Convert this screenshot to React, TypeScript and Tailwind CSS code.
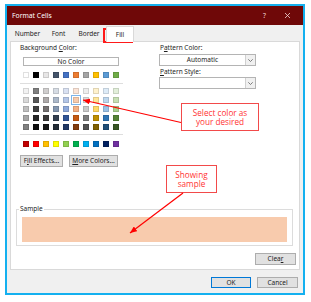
const BASE = ["#ffffff", "#000000", "#e7e6e6", "#44546a", "#4472c4", "#ed7d31", "#a5a5a5", "#ffc000", "#5b9bd5", "#70ad47"];

const TINTS = [
	["#f2f2f2", "#7f7f7f", "#d0cece", "#d6dce4", "#d9e1f2", "#fce4d6", "#ededed", "#fff2cc", "#ddebf7", "#e2efda"],
	["#d9d9d9", "#595959", "#aeaaaa", "#acb9ca", "#b4c6e7", "#f8cbad", "#dbdbdb", "#ffe699", "#bdd7ee", "#c6e0b4"],
	["#bfbfbf", "#404040", "#757171", "#8497b0", "#8ea9db", "#f4b084", "#c9c9c9", "#ffd966", "#9bc2e6", "#a9d08e"],
	["#a6a6a6", "#262626", "#3a3838", "#333f4f", "#305496", "#c65911", "#7b7b7b", "#bf8f00", "#2f75b5", "#548235"],
	["#808080", "#0d0d0d", "#161616", "#222b35", "#203764", "#833c0c", "#525252", "#806000", "#1f4e78", "#375623"],
];

const STANDARD = ["#c00000", "#ff0000", "#ffc000", "#ffff00", "#92d050", "#00b050", "#00b0f0", "#0070c0", "#002060", "#7030a0"];

function Swatch({ color, selected }: { color: string; selected?: boolean }) {
	return (
		<div className="relative w-[6px] h-[6px]">
			<div
				className="w-full h-full shadow-[inset_0_0_0_1px_rgba(0,0,0,0.12)]"
				style={{ backgroundColor: color }}
			/>
			{selected && <div className="absolute -inset-[2px] border border-[#7db4ea]" />}
		</div>
	);
}

function SwatchRow({ colors, selected }: { colors: string[]; selected?: number }) {
	return (
		<div className="flex gap-[4px] ml-[3px]">
			{colors.map((c, i) => (
				<Swatch key={c + i} color={c} selected={i === selected} />
			))}
		</div>
	);
}

function Dropdown({ value }: { value?: string }) {
	return (
		<div className="flex w-[97px] h-[12px] bg-white border border-[#b4b4b4]">
			<div className="flex-1 flex items-center justify-center">{value}</div>
			<div className="w-[10px] border-l border-[#d0d0d0] bg-[#f0f0f0] flex items-center justify-center">
				<svg width="5" height="3" viewBox="0 0 5 3" fill="none" stroke="#606060" strokeWidth="0.8">
					<path d="M0.3 0.3L2.5 2.5L4.7 0.3" />
				</svg>
			</div>
		</div>
	);
}

function Button({ children, w, primary }: { children: React.ReactNode; w: string; primary?: boolean }) {
	return (
		<div
			className={`${w} flex items-center justify-center bg-[#e1e1e1] border ${
				primary ? "border-[#0078d7]" : "border-[#adadad]"
			}`}
		>
			{children}
		</div>
	);
}

export default function App() {
	return (
		<div className="relative w-[311px] h-[302px] bg-white pl-[5px] pt-[4px] font-['Noto_Sans',sans-serif] text-[6.5px] leading-[8px] text-[#1e1e1e]">
			<div className="w-[300px] h-[291px] border-2 border-[#14b0ef] flex flex-col">
				{/* Title bar */}
				<div className="h-[19px] bg-[#6f0808] flex items-center pl-[5px] text-white text-[6.8px]">
					<span>Format Cells</span>
					<span className="ml-auto mr-[19px] text-[#f2d6d6]">?</span>
					<svg width="5" height="5" viewBox="0 0 5 5" stroke="#f2d6d6" strokeWidth="0.8" className="mr-[13px]">
						<path d="M0 0L5 5M5 0L0 5" />
					</svg>
				</div>

				<div className="flex-1 bg-[#f0f0f0] flex flex-col px-[3px]">
					{/* Tabs */}
					<div className="h-[16px] flex items-end">
						<div className="w-[35px] h-[15px] flex items-center justify-center">Number</div>
						<div className="w-[27px] h-[15px] flex items-center justify-center">Font</div>
						<div className="w-[34px] h-[15px] flex items-center justify-center">Border</div>
						<div className="relative z-10 w-[28px] h-[16px] -mb-px flex items-center justify-center bg-white border-x border-t border-[#d9d9d9]">
							Fill
						</div>
					</div>

					{/* Panel */}
					<div className="h-[229px] bg-white border border-[#d9d9d9] flex flex-col">
						<div className="h-[163px] flex pl-[9px]">
							{/* Background colour */}
							<div className="w-[139px] flex flex-col">
								<div className="mt-[2px] h-[8px]">
									Background <span className="underline">C</span>olor:
								</div>
								<div className="mt-[5px] ml-[3px] w-[96px] h-[9px] border border-[#b4b4b4] flex items-center justify-center">
									No Color
								</div>
								<div className="mt-[6px]">
									<SwatchRow colors={BASE} />
								</div>
								<div className="mt-[5px] w-[103px] h-px bg-[#dedede]" />
								<div className="mt-[4px] flex flex-col gap-[3px]">
									{TINTS.map((row, i) => (
										<SwatchRow key={i} colors={row} selected={i === 1 ? 5 : undefined} />
									))}
								</div>
								<div className="mt-[4px] w-[103px] h-px bg-[#dedede]" />
								<div className="mt-[6px]">
									<SwatchRow colors={STANDARD} />
								</div>
								<div className="mt-[8px] flex gap-[6px] h-[12px]">
									<Button w="w-[43px]">
										F<span className="underline">i</span>ll Effects...
									</Button>
									<Button w="w-[49px]">
										<span className="underline">M</span>ore Colors...
									</Button>
								</div>
							</div>

							{/* Pattern */}
							<div className="flex flex-col">
								<div className="mt-[2px] h-[8px] pl-[1px]">
									P<span className="underline">a</span>ttern Color:
								</div>
								<div className="mt-[2px]">
									<Dropdown value="Automatic" />
								</div>
								<div className="mt-[2px] h-[8px] pl-[1px]">
									<span className="underline">P</span>attern Style:
								</div>
								<div className="mt-[1px]">
									<Dropdown />
								</div>
							</div>
						</div>

						{/* Sample */}
						<fieldset className="ml-[5px] w-[277px] h-[41px] border border-[#dcdcdc] px-[5px]">
							<legend className="ml-[-3px] px-[1px] h-[8px]">Sample</legend>
							<div className="mt-[4px] h-[25px] bg-[#f8cbad]" />
						</fieldset>

						<div className="mt-[7px] flex justify-end pr-[3px]">
							<Button w="w-[41px] h-[12px]">
								Clea<span className="underline">r</span>
							</Button>
						</div>
					</div>

					{/* Dialog buttons */}
					<div className="mt-[7px] flex justify-end gap-[6px] pr-[2px] h-[11px]">
						<Button w="w-[40px]" primary>
							OK
						</Button>
						<Button w="w-[41px]">Cancel</Button>
					</div>
				</div>
			</div>

			{/* Annotations */}
			<div className="absolute left-[103px] top-[28px] w-[30px] h-[15px] border-2 border-[#ff1a1a]" />
			<div className="absolute left-[181px] top-[103px] w-[78px] h-[28px] bg-white border border-[#f24a4a] flex flex-col items-center justify-center text-[#ff3333] text-[8.2px] leading-[9.5px] font-['Open_Sans',sans-serif]">
				<span>Select color as</span>
				<span>your desired</span>
			</div>
			<div className="absolute left-[166px] top-[165px] w-[51px] h-[28px] bg-white border border-[#f24a4a] flex flex-col items-center justify-center text-[#ff3333] text-[8.2px] leading-[9.5px] font-['Open_Sans',sans-serif]">
				<span>Showing</span>
				<span>sample</span>
			</div>
			<svg className="absolute left-0 top-0 pointer-events-none" width="311" height="302" viewBox="0 0 311 302">
				<defs>
					<marker id="ah" markerUnits="userSpaceOnUse" markerWidth="7" markerHeight="6" refX="7" refY="3" orient="auto">
						<path d="M0 0L7 3L0 6z" fill="#ff0000" />
					</marker>
				</defs>
				<line x1="181" y1="122.5" x2="83" y2="100" stroke="#ff0000" strokeWidth="1.2" markerEnd="url(#ah)" />
				<line x1="183" y1="193" x2="130" y2="233" stroke="#ff0000" strokeWidth="1.2" markerEnd="url(#ah)" />
			</svg>
		</div>
	);
}
